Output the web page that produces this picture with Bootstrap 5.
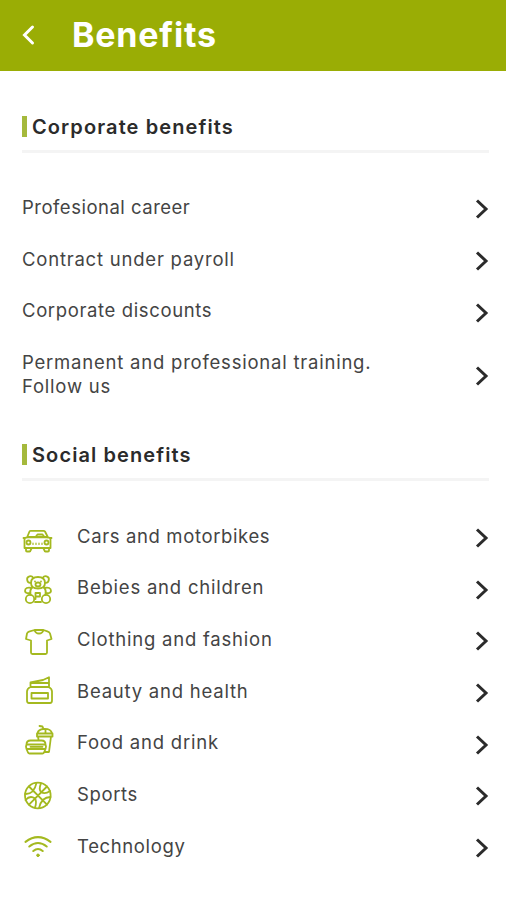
<!DOCTYPE html>
<html lang="en">
<head>
<meta charset="utf-8">
<meta name="viewport" content="width=device-width, initial-scale=1">
<title>Benefits</title>
<link href="https://cdn.jsdelivr.net/npm/bootstrap@5.3.0/dist/css/bootstrap.min.css" rel="stylesheet">
<style>
body{font-family:Inter,"Open Sans",sans-serif;color:#3c3c3c;background:#fff}
.topbar{background:#9aad05;height:70.5px;padding:0 22px}
.topbar h1{font-size:34px;letter-spacing:.8px;line-height:40px;margin-left:36px}
.wrap{padding:0 17px 0 22px}
.section-head{border-bottom:3px solid #f4f4f4;height:37px}
.section-head h2{font-size:20px;font-weight:600;letter-spacing:1.1px;line-height:22px;color:#2b2b2b}
.accent{width:5px;height:21px;background:#a5b93c;margin-right:5px}
.first{margin-top:45px}
.second{margin-top:32px}
.rows{padding-top:29.5px}
.item{height:51.7px;font-size:18.5px;letter-spacing:.78px;line-height:23.5px;color:#444}
.item.tall{height:75px}
.snug{letter-spacing:.63px}
.snugger{letter-spacing:.5px}
.item .chev{margin-top:3px}
.pic{width:30px;height:34px;margin:4px 25px 0 0;overflow:visible;fill:none;stroke:#a4b91f;stroke-width:1.8;stroke-linecap:round;stroke-linejoin:round}
.chev{width:14px;height:20px;fill:none;stroke:#2b2b2b;stroke-width:3}
</style>
</head>
<body>
<header class="topbar d-flex align-items-center text-white">
<svg width="14" height="22" viewBox="0 0 14 22" fill="none" stroke="#fff" stroke-width="3" stroke-linecap="round"><path d="M10.500 3L2.500 11L10.500 19"/></svg>
<h1 class="fw-bold mb-0"><span>Benefits</span></h1>
</header>
<main class="wrap">
<section class="first">
<div class="section-head d-flex align-items-start"><span class="accent"></span><h2 class="mb-0"><span>Corporate benefits</span></h2></div>
<div class="rows">
<div class="item d-flex align-items-center justify-content-between"><span class="snugger">Profesional career</span><svg class="chev" viewBox="0 0 14 20"><path d="M2 1.500L11 10L2 18.500"/></svg></div>
<div class="item d-flex align-items-center justify-content-between"><span>Contract under payroll</span><svg class="chev" viewBox="0 0 14 20"><path d="M2 1.500L11 10L2 18.500"/></svg></div>
<div class="item d-flex align-items-center justify-content-between"><span class="snug">Corporate discounts</span><svg class="chev" viewBox="0 0 14 20"><path d="M2 1.500L11 10L2 18.500"/></svg></div>
<div class="item tall d-flex align-items-center justify-content-between"><span>Permanent and professional training.<br>Follow us</span><svg class="chev" viewBox="0 0 14 20"><path d="M2 1.500L11 10L2 18.500"/></svg></div>
</div>
</section>
<section class="second">
<div class="section-head d-flex align-items-start"><span class="accent"></span><h2 class="mb-0"><span>Social benefits</span></h2></div>
<div class="rows">
<div class="item d-flex align-items-center"><svg class="pic" viewBox="7.500 6.500 30 34"><path d="M12.500 23L15 17Q15.300 16.300 16.500 16.300H29Q30 16.300 30.500 17L33.500 23M9 23.500H10.500L13 22.500H32.500L35.500 23.500H37M10 25Q10 22.800 13 22.800H33Q36 22.800 36 25V33.500H10ZM11.500 33.500V36Q11.500 37 12.500 37H15Q16 37 16 36L17 34M29 34L30 36Q30 37 31 37H33.500Q34.500 37 34.500 36V33.500M21 22.500L23 20H28L30 22.500"/><circle cx="14" cy="28" r="2"/><circle cx="32" cy="28" r="2"/><path d="M18.500 28.500V30M21.500 28.500V30M24.500 28.500V30M27.500 28.500V30" stroke-width="1.200"/></svg><span class="snug">Cars and motorbikes</span><svg class="chev ms-auto" viewBox="0 0 14 20"><path d="M2 1.500L11 10L2 18.500"/></svg></div>
<div class="item d-flex align-items-center"><svg class="pic" viewBox="7 7 30 34"><path d="M18.500 12.300A3.300 3.300 0 1 0 16 16.800M27.500 12.300A3.300 3.300 0 1 1 30 16.800M16 17Q16 11 23 11Q30 11 30 17Q30 22.500 23 22.500Q16 22.500 16 17M17 22Q10 20.500 10 25Q10.500 28 15.500 27M29 22Q36 20.500 36 25Q35.500 28 30.500 27M16.500 22Q14.500 25 15.500 29M29.500 22Q31.500 25 30.500 29M20 36H26"/><circle cx="15" cy="33" r="4.200"/><circle cx="31" cy="33" r="4.200"/><ellipse cx="23" cy="18.500" rx="2.500" ry="2"/><path d="M20.500 33V27H25V30.500H21M20 15.500V15.600M26 15.500V15.600"/></svg><span>Bebies and children</span><svg class="chev ms-auto" viewBox="0 0 14 20"><path d="M2 1.500L11 10L2 18.500"/></svg></div>
<div class="item d-flex align-items-center"><svg class="pic" viewBox="7.500 7.500 30 34"><path d="M20 12.500L14.500 14.200Q13 14.700 12.500 16L11.500 21.500L16.500 23V35Q16.500 36.500 18 36.500H31Q32.500 36.500 32.500 35V23L37 21.500L35.500 16Q35 14.700 33.500 14.200L29 12.500ZM20 12.500Q21 16 24.500 16Q28 16 29 12.500"/></svg><span>Clothing and fashion</span><svg class="chev ms-auto" viewBox="0 0 14 20"><path d="M2 1.500L11 10L2 18.500"/></svg></div>
<div class="item d-flex align-items-center"><svg class="pic" viewBox="7 9.500 30 34"><path d="M15.500 20.500Q12 22 12 25V34Q12 36.500 14 36.500H35Q37 36.500 37 34V25Q37 22 33.500 20.500ZM15.500 20.500V16L28 13.500L34 10.800V20.500M15.500 16.500H33.500"/><path d="M16.500 26.500H33V32H16.500Z"/></svg><span>Beauty and health</span><svg class="chev ms-auto" viewBox="0 0 14 20"><path d="M2 1.500L11 10L2 18.500"/></svg></div>
<div class="item d-flex align-items-center"><svg class="pic" viewBox="7.500 11.500 30 34"><path d="M22.500 20V17H38V20ZM23 16.500Q24 13 29 12.500L28 10L25 9.500M29 12.500Q36 12 37.500 16.500M31 13V16M23.500 20L24 23M36.500 20L34.500 35.500H31M12 28Q12 24 16 24H27Q31 24 31 28ZM12 32.500H31L29.500 36Q29 37 28 37H15Q14 37 13.500 36ZM12 28L11.500 30L12 32.500M31 28L31.500 30L31 32.500M16 30.300H28"/></svg><span>Food and drink</span><svg class="chev ms-auto" viewBox="0 0 14 20"><path d="M2 1.500L11 10L2 18.500"/></svg></div>
<div class="item d-flex align-items-center"><svg class="pic" viewBox="7.500 9.500 30 34"><circle cx="23.300" cy="25" r="12.800"/><path d="M14.500 34.200L32.500 16M14.500 16L32.500 34.200M10.700 23.500Q19.500 24 22 12.400M24.500 37.600Q27 26.500 36 26.500M11 29.500Q15.500 24.500 20.500 28Q22.500 31 20.500 37M26.500 12.800Q24 18.500 26.500 21.500Q30.500 24 35.500 20.500"/></svg><span class="snug">Sports</span><svg class="chev ms-auto" viewBox="0 0 14 20"><path d="M2 1.500L11 10L2 18.500"/></svg></div>
<div class="item d-flex align-items-center"><svg class="pic" viewBox="7.500 62 30 34"><path stroke-width="2.100" d="M11 71.800Q23.500 62.500 36 71.800M14.800 76.500Q23.500 69.500 32.200 76.500M18.800 81Q23.500 77 28.200 81"/><circle cx="23.500" cy="85.300" r="1.300" fill="#a4b91f" stroke-width="1"/></svg><span class="snug">Technology</span><svg class="chev ms-auto" viewBox="0 0 14 20"><path d="M2 1.500L11 10L2 18.500"/></svg></div>
</div>
</section>
</main>
<script src="https://cdn.jsdelivr.net/npm/bootstrap@5.3.0/dist/js/bootstrap.bundle.min.js"></script>
</body>
</html>
